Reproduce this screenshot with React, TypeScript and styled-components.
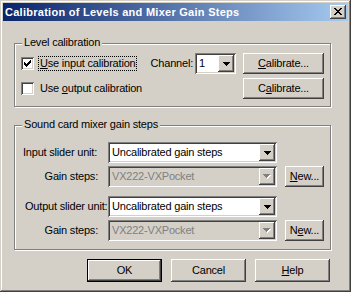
import React from 'react'
import styled, { createGlobalStyle, css } from 'styled-components'

const FACE = '#d4d0c8'
const HILITE = '#ffffff'
const SHADOW = '#808080'
const DARK = '#404040'

const GlobalStyle = createGlobalStyle`
    html, body {
        margin: 0;
        padding: 0;
        background: ${FACE};
    }
    body {
        font-family: "Liberation Sans", Arial, sans-serif;
        font-size: 11px;
        line-height: 13px;
        letter-spacing: -0.2px;
        color: #000;
    }
`

// win2k bevels
const raised = css`
    box-shadow: inset -1px -1px ${DARK}, inset 1px 1px ${HILITE}, inset -2px -2px ${SHADOW}, inset 2px 2px ${FACE};
`
const sunken = css`
    box-shadow: inset 1px 1px ${SHADOW}, inset -1px -1px ${HILITE}, inset 2px 2px ${DARK}, inset -2px -2px ${FACE};
`

const Window = styled.div`
    width: 351px;
    height: 292px;
    box-sizing: border-box;
    padding: 3px;
    background: ${FACE};
    box-shadow: inset -1px -1px ${DARK}, inset 1px 1px ${FACE}, inset -2px -2px ${SHADOW}, inset 2px 2px ${HILITE};
    display: flex;
    flex-direction: column;
`

const TitleBar = styled.div`
    height: 18px;
    display: flex;
    align-items: center;
    padding: 0 2px;
    background: linear-gradient(to right, #0a246a, #a6caf0);
`

const Title = styled.div`
    flex: 1;
    color: #fff;
    font-weight: bold;
    letter-spacing: 0.27px;
    white-space: nowrap;
    overflow: hidden;
`

const CaptionButton = styled.div`
    width: 16px;
    height: 14px;
    background: ${FACE};
    ${raised};
    display: flex;
    align-items: center;
    justify-content: center;
    svg { margin: 0 0 1px 0; }
`

const Body = styled.div`
    display: flex;
    flex-direction: column;
    padding: 22px 0 0 11px;
`

const Group = styled.div<{ $top: number }>`
    position: relative;
    width: 317px;
    box-sizing: border-box;
    margin-top: ${p => p.$top}px;
    border: 1px solid ${SHADOW};
    box-shadow: inset 1px 1px ${HILITE}, 1px 1px 0 ${HILITE};
`

const GroupCaption = styled.div`
    position: absolute;
    top: -8px;
    left: 7px;
    padding: 0 2px;
    background: ${FACE};
    white-space: nowrap;
`

const LevelRows = styled.div`
    display: flex;
    flex-direction: column;
    gap: 4px;
    padding: 9px 6px 7px 6px;
`

const Row = styled.div`
    display: flex;
    align-items: center;
    height: 21px;
`

const CheckField = styled.div`
    flex: 1;
    display: flex;
    align-items: center;
`

const CheckBox = styled.div`
    width: 13px;
    height: 13px;
    box-sizing: border-box;
    background: #fff;
    ${sunken};
    display: flex;
    align-items: center;
    justify-content: center;
`

const CheckText = styled.div<{ $focus?: boolean }>`
    margin-left: 4px;
    padding: 0 1px;
    border: 1px ${p => (p.$focus ? 'dotted #000' : 'solid transparent')};
    white-space: nowrap;
`

const Label = styled.div<{ $align?: 'left' | 'right', $inset?: number }>`
    white-space: nowrap;
    text-align: ${p => p.$align || 'left'};
    padding-left: ${p => (p.$align === 'right' ? 0 : p.$inset || 0)}px;
    padding-right: ${p => (p.$align === 'right' ? p.$inset || 0 : 0)}px;
`

const ChannelLabel = styled(Label)`
    margin-right: 2px;
`

const Combo = styled.div<{ $width?: number, $disabled?: boolean }>`
    display: flex;
    width: ${p => (p.$width ? `${p.$width}px` : 'auto')};
    height: 21px;
    box-sizing: border-box;
    padding: 2px;
    background: ${p => (p.$disabled ? FACE : '#fff')};
    color: ${p => (p.$disabled ? SHADOW : '#000')};
    ${sunken};
`

const ComboText = styled.div`
    flex: 1;
    padding-left: 2px;
    line-height: 17px;
    white-space: nowrap;
    overflow: hidden;
`

const ComboArrow = styled.div`
    width: 16px;
    height: 17px;
    box-sizing: border-box;
    background: ${FACE};
    ${raised};
    display: flex;
    align-items: center;
    justify-content: center;
`

const Button = styled.div<{ $width: number, $height?: number, $default?: boolean }>`
    width: ${p => p.$width}px;
    height: ${p => p.$height || 21}px;
    box-sizing: border-box;
    background: ${FACE};
    ${raised};
    border: ${p => (p.$default ? '1px solid #000' : 'none')};
    display: flex;
    align-items: center;
    justify-content: center;
    white-space: nowrap;
    cursor: default;
`

const ComboSpacer = styled.div`
    width: 7px;
`

const MixerBlocks = styled.div`
    display: flex;
    flex-direction: column;
    gap: 9px;
    padding: 16px 6px 8px 6px;
`

const SliderBlock = styled.div`
    display: grid;
    grid-template-columns: 87px 169px 1fr;
    grid-auto-rows: 21px;
    row-gap: 3px;
    align-items: center;
    > :nth-child(3n) {
        justify-self: end;
    }
`

const ButtonRow = styled.div`
    display: flex;
    justify-content: flex-end;
    gap: 9px;
    width: 317px;
    box-sizing: border-box;
    padding-right: 1px;
    margin-top: 9px;
`

const Key = styled.span`
    text-decoration: underline;
`

// pixel glyphs, one string per row
const Pixels = ({ rows, color }: { rows: string[], color: string }) => (
    <svg width={rows[0].length} height={rows.length} shapeRendering="crispEdges" style={{ display: 'block' }}>
        {rows.map((row, y) =>
            row.split('').map((c, x) => (c === '#' ? <rect key={`${x}-${y}`} x={x} y={y} width={1} height={1} fill={color} /> : null))
        )}
    </svg>
)

const CLOSE = [
    '##....##',
    '.##..##.',
    '..####..',
    '...##...',
    '..####..',
    '.##..##.',
    '##....##',
]

const CHECK = [
    '......#',
    '.....##',
    '#...###',
    '##.###.',
    '#####..',
    '.###...',
    '..#....',
]

const ARROW = [
    '#######',
    '.#####.',
    '..###..',
    '...#...',
]

const DisabledArrow = () => (
    <svg width={8} height={5} shapeRendering="crispEdges" style={{ display: 'block' }}>
        <polygon points="1,1 8,1 4.5,5" fill={HILITE} />
        <polygon points="0,0 7,0 3.5,4" fill={SHADOW} />
    </svg>
)

const Dropdown = ({ value, width, disabled }: { value: string, width?: number, disabled?: boolean }) => (
    <Combo $width={width} $disabled={disabled}>
        <ComboText>{value}</ComboText>
        <ComboArrow>{disabled ? <DisabledArrow /> : <Pixels rows={ARROW} color="#000" />}</ComboArrow>
    </Combo>
)

const Check = ({ checked, focus, children }: { checked?: boolean, focus?: boolean, children: React.ReactNode }) => (
    <CheckField>
        <CheckBox>{checked && <Pixels rows={CHECK} color="#000" />}</CheckBox>
        <CheckText $focus={focus}>{children}</CheckText>
    </CheckField>
)

const SliderUnit = ({ label, inset, newKey }: { label: string, inset: number, newKey: 'N' | 'e' }) => (
    <SliderBlock>
        <Label $inset={inset}>{label}</Label>
        <Dropdown value="Uncalibrated gain steps" />
        <span />
        <Label $align="right" $inset={10}>Gain steps:</Label>
        <Dropdown value="VX222-VXPocket" disabled />
        <Button $width={39}>
            {newKey === 'N' ? <><Key>N</Key>ew...</> : <>N<Key>e</Key>w...</>}
        </Button>
    </SliderBlock>
)

const App = () => (
    <>
        <GlobalStyle />
        <Window>
            <TitleBar>
                <Title>Calibration of Levels and Mixer Gain Steps</Title>
                <CaptionButton><Pixels rows={CLOSE} color="#000" /></CaptionButton>
            </TitleBar>
            <Body>
                <Group $top={0}>
                    <GroupCaption>Level calibration</GroupCaption>
                    <LevelRows>
                        <Row>
                            <Check checked focus><Key>U</Key>se input calibration</Check>
                            <ChannelLabel>Channel:</ChannelLabel>
                            <Dropdown value="1" width={41} />
                            <ComboSpacer />
                            <Button $width={81}><Key>C</Key>alibrate...</Button>
                        </Row>
                        <Row>
                            <Check>Use <Key>o</Key>utput calibration</Check>
                            <Button $width={81}>C<Key>a</Key>librate...</Button>
                        </Row>
                    </LevelRows>
                </Group>
                <Group $top={18}>
                    <GroupCaption>Sound card mixer gain steps</GroupCaption>
                    <MixerBlocks>
                        <SliderUnit label="Input slider unit:" inset={2} newKey="N" />
                        <SliderUnit label="Output slider unit:" inset={4} newKey="e" />
                    </MixerBlocks>
                </Group>
                <ButtonRow>
                    <Button $width={75} $height={23} $default>OK</Button>
                    <Button $width={75} $height={23}>Cancel</Button>
                    <Button $width={75} $height={23}><Key>H</Key>elp</Button>
                </ButtonRow>
            </Body>
        </Window>
    </>
)

export default App
